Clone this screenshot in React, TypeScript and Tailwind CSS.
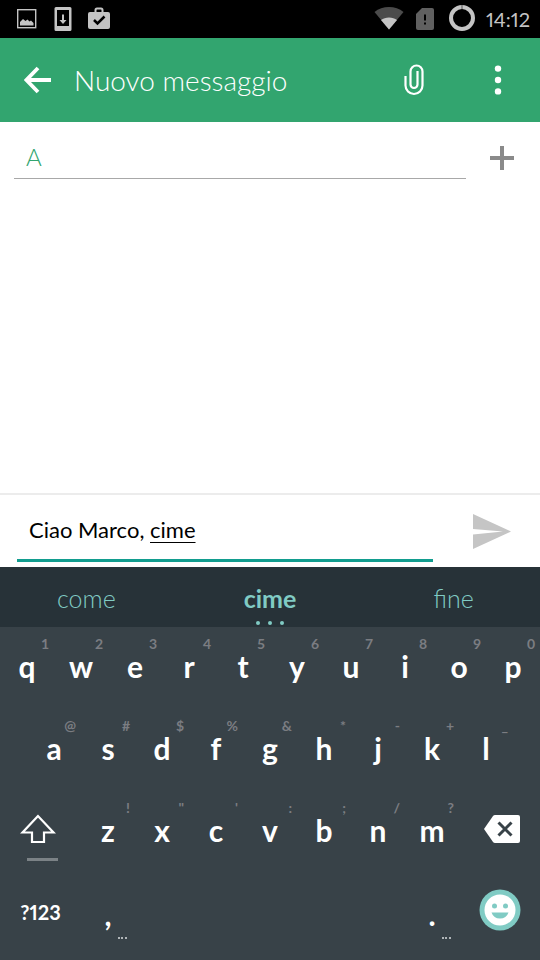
import { useState } from 'react';
import clsx from 'clsx';

interface KeyDef {
  label: string;
  hint: string;
}

const topRow: KeyDef[] = [
  { label: 'q', hint: '1' },
  { label: 'w', hint: '2' },
  { label: 'e', hint: '3' },
  { label: 'r', hint: '4' },
  { label: 't', hint: '5' },
  { label: 'y', hint: '6' },
  { label: 'u', hint: '7' },
  { label: 'i', hint: '8' },
  { label: 'o', hint: '9' },
  { label: 'p', hint: '0' },
];

const homeRow: KeyDef[] = [
  { label: 'a', hint: '@' },
  { label: 's', hint: '#' },
  { label: 'd', hint: '$' },
  { label: 'f', hint: '%' },
  { label: 'g', hint: '&' },
  { label: 'h', hint: '*' },
  { label: 'j', hint: '-' },
  { label: 'k', hint: '+' },
  { label: 'l', hint: '_' },
];

const bottomRow: KeyDef[] = [
  { label: 'z', hint: '!' },
  { label: 'x', hint: '"' },
  { label: 'c', hint: "'" },
  { label: 'v', hint: ':' },
  { label: 'b', hint: ';' },
  { label: 'n', hint: '/' },
  { label: 'm', hint: '?' },
];

const suggestions = ['come', 'cime', 'fine'];

function StatusBar() {
  return (
    <div className="flex h-[38px] items-center justify-between bg-black pr-2.5 pl-4 text-[#c4c4c4]">
      <div className="flex items-center gap-4">
        <svg width="22" height="20" viewBox="0 0 22 20">
          <rect x="1.700" y="0.700" width="18" height="18" fill="none" stroke="currentColor" strokeWidth="1.400" />
          <path d="M4 16.500v-3.500l3-3 2.500 2 2-1.500 2 2 1.500-1 2.500 2.500v2.500z" fill="currentColor" />
        </svg>
        <svg width="18" height="26" viewBox="0 0 18 26">
          <path fillRule="evenodd" d="M2 1h14a1.500 1.500 0 0 1 1.500 1.500v21a1.500 1.500 0 0 1-1.500 1.500H2a1.500 1.500 0 0 1-1.500-1.500v-21A1.500 1.500 0 0 1 2 1zM3 4v16h12V4z" fill="currentColor" />
          <path d="M8 8.500h2v5.500h2.500l-3.500 4-3.500-4h2.500z" fill="currentColor" />
        </svg>
        <svg width="22" height="24" viewBox="0 0 22 24">
          <path d="M7.500 5V3a1.500 1.500 0 0 1 1.500-1.500h4a1.500 1.500 0 0 1 1.500 1.500V5" fill="none" stroke="currentColor" strokeWidth="2" />
          <rect x="0" y="5" width="22" height="17" rx="2" fill="currentColor" />
          <path d="M6 13l3.500 3.500 7-7" fill="none" stroke="black" strokeWidth="2.500" />
        </svg>
      </div>
      <div className="flex items-center gap-3">
        <svg width="30" height="24" viewBox="0 0 30 24">
          <path d="M15 22.500L.5 5C4.500 1.500 9.500 0 15 0s10.500 1.500 14.500 5z" fill="#4b4b4b" />
          <path d="M15 22.500L7 13c2-1.600 5-2.500 8-2.500s6 .9 8 2.500z" fill="currentColor" />
        </svg>
        <svg width="18" height="22" viewBox="0 0 18 22">
          <path d="M6 0h10a2 2 0 0 1 2 2v18a2 2 0 0 1-2 2H2a2 2 0 0 1-2-2V6z" fill="#606060" />
          <path d="M8 6.500h2v6H8zM8 14.500h2v2H8z" fill="black" />
        </svg>
        <svg width="28" height="28" viewBox="0 0 28 28" className="ml-0.5">
          <circle cx="14" cy="13" r="11" fill="none" stroke="currentColor" strokeWidth="4" />
          <path d="M14 0v4" stroke="#555" strokeWidth="1" />
        </svg>
        <span className="-ml-0.5 text-xl font-normal proportional-nums">14:12</span>
      </div>
    </div>
  );
}

function AppBar() {
  return (
    <header className="flex h-21 items-center bg-[#32a56f] text-white">
      <button type="button" aria-label="Indietro" className="flex h-full w-[74px] items-center pl-6">
        <svg width="28" height="28" viewBox="0 0 28 28" fill="none" stroke="currentColor" strokeWidth="3.800">
          <path d="M14 2L2.500 14 14 26M2 14h25" />
        </svg>
      </button>
      <h1 className="flex-1 text-[28px] leading-9 font-light">Nuovo messaggio</h1>
      <button type="button" aria-label="Allega" className="flex size-21 items-center justify-center">
        <svg width="20" height="32" viewBox="0 0 20 32" fill="none" stroke="currentColor" strokeWidth="2.200">
          <path d="M1.500 12v9.500a8.500 8.500 0 0 0 17 0V7.500a6 6 0 0 0-12 0v13a3.500 3.500 0 0 0 7 0V7" />
        </svg>
      </button>
      <button type="button" aria-label="Altre opzioni" className="flex size-21 items-center justify-center">
        <svg width="8" height="32" viewBox="0 0 8 32" fill="currentColor">
          <circle cx="4" cy="4.600" r="3.200" />
          <circle cx="4" cy="16" r="3.200" />
          <circle cx="4" cy="27.400" r="3.200" />
        </svg>
      </button>
    </header>
  );
}

function Recipients() {
  return (
    <div className="flex pt-4 pl-3.5">
      <input
        type="text"
        aria-label="Destinatario"
        placeholder="A"
        className="h-[41px] min-w-0 flex-1 border-b border-[#a8a8a8] px-3 pb-1 text-2xl font-light outline-none placeholder:text-[#32a56f]"
      />
      <button type="button" aria-label="Aggiungi contatto" className="flex h-10 w-[74px] items-center justify-center pr-0.5 text-[#8a8a8a]">
        <svg width="24" height="24" viewBox="0 0 24 24" stroke="currentColor" strokeWidth="4">
          <path d="M12 0v24M0 12h24" />
        </svg>
      </button>
    </div>
  );
}

function Compose() {
  const [text, setText] = useState('Ciao Marco, cime');
  const start = text.lastIndexOf(' ') + 1;

  return (
    <div className="flex border-t-2 border-[#ececec] pb-[5px] pl-[17px]">
      <div className="relative min-w-0 flex-1">
        <input
          type="text"
          aria-label="Messaggio"
          value={text}
          onChange={(e) => setText(e.target.value)}
          className="h-[67px] w-full border-b-3 border-[#129d8f] px-3 pt-1 text-[22px] text-black outline-none"
        />
        {/* Underlines the word being composed */}
        <div aria-hidden="true" className="pointer-events-none absolute inset-x-0 top-0 flex h-16 items-center px-3 pt-1 text-[22px] whitespace-pre text-transparent">
          <span>{text.slice(0, start)}</span>
          <span className="underline decoration-black decoration-1 underline-offset-4">{text.slice(start)}</span>
        </div>
      </div>
      <button type="button" aria-label="Invia" className="flex w-[107px] items-center justify-center pt-1.5 pl-2.5 text-[#c5c5c5]">
        <svg width="38" height="35" viewBox="0 0 38 35" fill="currentColor">
          <path d="M0 0l38 17.500L0 35V20.500l30-3L0 15z" />
        </svg>
      </button>
    </div>
  );
}

function Key({ label, hint }: KeyDef) {
  return (
    <button type="button" className="relative col-span-2 flex items-center justify-center pb-1 text-[30px] leading-9 font-bold text-white">
      {label}
      <span className="absolute top-2 right-[5px] text-sm leading-[18px] font-bold text-[#7b7d82]">{hint}</span>
    </button>
  );
}

function PunctuationKey({ label }: { label: string }) {
  return (
    <button type="button" className="relative col-span-2 flex items-center justify-center text-[30px] leading-9 font-bold text-white">
      {label}
      <svg width="9" height="2" viewBox="0 0 9 2" fill="#b0b5b8" className="absolute right-2 bottom-4">
        <path d="M0 0h2v2H0zM3 0h2v2H3zM7 0h2v2H7z" />
      </svg>
    </button>
  );
}

function Keyboard() {
  return (
    <div className="bg-[#384248]">
      <div className="flex h-15 bg-[#273238] text-[#80cbc4]">
        {suggestions.map((word, idx) => (
          <button
            key={word}
            type="button"
            className={clsx('relative flex items-center justify-center pt-1 text-[25px]', idx === 1 ? 'flex-1 font-bold' : 'w-[32%] font-light')}
          >
            {word}
            {idx === 1 && (
              <svg width="28" height="4" viewBox="0 0 28 4" fill="currentColor" className="absolute bottom-[2px]">
                <circle cx="2" cy="2" r="2" />
                <circle cx="14" cy="2" r="2" />
                <circle cx="26" cy="2" r="2" />
              </svg>
            )}
          </button>
        ))}
      </div>
      <div className="grid auto-rows-[82px] grid-cols-20 pb-[5px]">
        {topRow.map((k) => (
          <Key key={k.label} {...k} />
        ))}
        <div />
        {homeRow.map((k) => (
          <Key key={k.label} {...k} />
        ))}
        <div />
        <button type="button" aria-label="Maiuscole" className="col-span-3 flex flex-col items-start justify-center gap-3.5 pt-2.5 pl-5 text-white">
          <svg width="36" height="30" viewBox="0 0 36 30" fill="none" stroke="currentColor" strokeWidth="2.200">
            <path d="M18 2L2.500 18.500H12V28h12v-9.500h9.500z" />
          </svg>
          <span className="ml-[7px] h-[3px] w-[31px] bg-[#7b8286]" />
        </button>
        {bottomRow.map((k) => (
          <Key key={k.label} {...k} />
        ))}
        <button type="button" aria-label="Cancella" className="col-span-3 flex items-center justify-end pr-5 pb-1.5 text-white">
          <svg width="36" height="28" viewBox="0 0 36 28">
            <path d="M11 0h23a2 2 0 0 1 2 2v24a2 2 0 0 1-2 2H11a3 3 0 0 1-2-1L0 14 9 1a3 3 0 0 1 2-1z" fill="currentColor" />
            <path d="M14.500 7.500l13 13M27.500 7.500l-13 13" stroke="#384248" strokeWidth="3" />
          </svg>
        </button>
        <button type="button" className="col-span-3 flex items-center justify-center pb-1 text-xl font-bold text-white proportional-nums">
          ?123
        </button>
        <PunctuationKey label="," />
        <button type="button" aria-label="Spazio" className="col-span-10" />
        <PunctuationKey label="." />
        <button type="button" aria-label="Emoji" className="col-span-3 flex items-center justify-center pb-2">
          <svg width="42" height="42" viewBox="0 0 42 42">
            <circle cx="21" cy="21" r="20.500" fill="#80cbc4" />
            <circle cx="21" cy="21" r="15.500" fill="white" />
            <circle cx="15.500" cy="17" r="2.500" fill="#80cbc4" />
            <circle cx="26.500" cy="17" r="2.500" fill="#80cbc4" />
            <path d="M12.500 23.500h17a9 9 0 0 1-17 0z" fill="#80cbc4" />
          </svg>
        </button>
      </div>
    </div>
  );
}

export default function App() {
  return (
    <div className="flex min-h-screen flex-col bg-white font-['Lato',sans-serif]">
      <StatusBar />
      <AppBar />
      <main className="flex flex-1 flex-col justify-between">
        <Recipients />
        <Compose />
      </main>
      <Keyboard />
    </div>
  );
}
